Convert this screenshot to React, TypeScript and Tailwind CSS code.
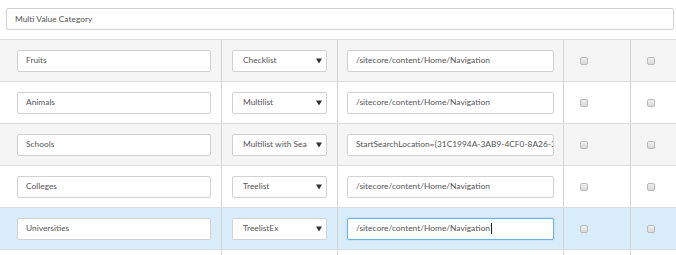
import React from 'react'

type Row = {
  name: string
  type: string
  source: string
  bg: string
  active?: boolean
}

const rows: Row[] = [
  { name: 'Fruits', type: 'Checklist', source: '/sitecore/content/Home/Navigation', bg: 'bg-[#f5f5f5]' },
  { name: 'Animals', type: 'Multilist', source: '/sitecore/content/Home/Navigation', bg: 'bg-white' },
  { name: 'Schools', type: 'Multilist with Search', source: 'StartSearchLocation={31C1994A-3AB9-4CF0-8A26-3308B4C8A6C9}', bg: 'bg-[#f5f5f5]' },
  { name: 'Colleges', type: 'Treelist', source: '/sitecore/content/Home/Navigation', bg: 'bg-white' },
  { name: 'Universities', type: 'TreelistEx', source: '/sitecore/content/Home/Navigation', bg: 'bg-[#d8ecf9]', active: true },
]

function Box() {
  return (
    <span className="block h-[8px] w-[8px] rounded-[2px] border border-[#b9b9b9] bg-gradient-to-b from-[#f0f0f0] to-[#d8d8d8]" />
  )
}

function Field({ value, active }: { value: string; active?: boolean }) {
  return (
    <div
      className={
        'flex h-[22px] w-full items-center overflow-hidden whitespace-nowrap rounded-[2px] border bg-white px-[8px] text-[8.4px] text-[#555]' +
        (active ? ' border-[#6fb0e6] shadow-[0_0_2px_#a8d0f0]' : ' border-[#d2d2d2]')
      }
    >
      <span>{value}</span>
      {active && <span className="ml-px h-[11px] w-px bg-[#222]" />}
    </div>
  )
}

function Select({ value }: { value: string }) {
  return (
    <div className="flex h-[22px] w-full items-center rounded-[2px] border border-[#d2d2d2] bg-white pl-[10px] pr-[4px] text-[8.4px] text-[#555]">
      <span className="flex-1 overflow-hidden whitespace-nowrap">{value}</span>
      <svg width="6" height="6" viewBox="0 0 6 6" className="ml-[9px] shrink-0">
        <path d="M0 0.5h6L3 5.5z" fill="#333" />
      </svg>
    </div>
  )
}

export default function App() {
  return (
    <div className="h-[255px] w-[676px] overflow-hidden bg-white font-['Lato','Open_Sans',sans-serif]">
      <div className="pb-[9px] pl-[6px] pr-[2px] pt-[8px]">
        <div className="flex h-[22px] items-center rounded-[2px] border border-[#d2d2d2] bg-white px-[8px] text-[8.4px] text-[#555]">
          Multi Value Category
        </div>
      </div>

      <div className="border-t border-[#dcdcdc]">
        {rows.map((r) => (
          <div
            key={r.name}
            className={'grid h-[42px] grid-cols-[221px_116px_226px_67px_1fr] border-b border-[#dcdcdc] ' + r.bg}
          >
            <div className="flex items-center pl-[17px] pr-[10px]">
              <Field value={r.name} />
            </div>
            <div className="flex items-center border-l border-[#d4d4d4] px-[10px]">
              <Select value={r.type} />
            </div>
            <div className="flex items-center border-l border-[#d4d4d4] px-[9px]">
              <Field value={r.source} active={r.active} />
            </div>
            <div className="flex items-center border-l border-[#d4d4d4] pl-[16px]">
              <Box />
            </div>
            <div className="flex items-center border-l border-[#d4d4d4] pl-[16px]">
              <Box />
            </div>
          </div>
        ))}
        <div className="grid h-[10px] grid-cols-[221px_116px_226px_67px_1fr]">
          <div />
          <div className="border-l border-[#d4d4d4]" />
          <div className="border-l border-[#d4d4d4]" />
          <div className="border-l border-[#d4d4d4]" />
          <div className="border-l border-[#d4d4d4]" />
        </div>
      </div>
    </div>
  )
}
